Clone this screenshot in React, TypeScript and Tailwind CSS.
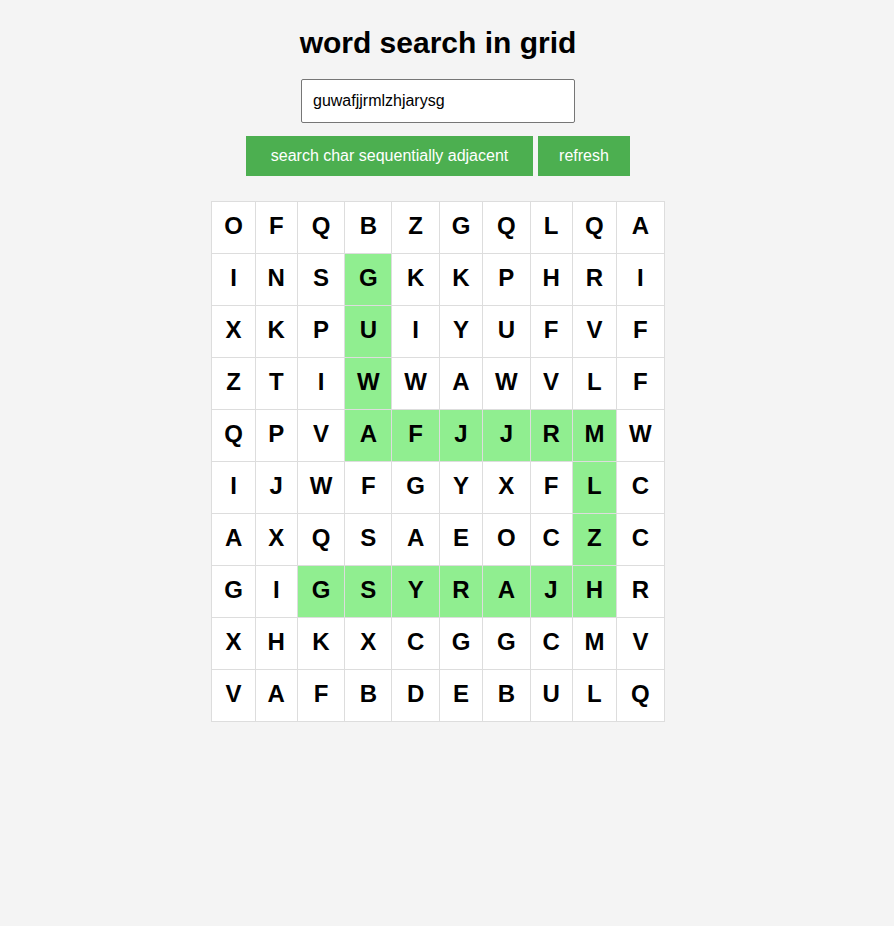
import { useState } from "react"

const GRID = [
  "OFQBZGQLQA",
  "INSGKKPHRI",
  "XKPUIYUFVF",
  "ZTIWWAWVLF",
  "QPVAFJJRMW",
  "IJWFGYXFLC",
  "AXQSAEOCZC",
  "GIGSYRAJHR",
  "XHKXCGGCMV",
  "VAFBDEBULQ",
]

// path of the found word, row-col pairs
const PATH = [
  [1, 3], [2, 3], [3, 3], [4, 3], [4, 4], [4, 5], [4, 6], [4, 7], [4, 8],
  [5, 8], [6, 8], [7, 8], [7, 7], [7, 6], [7, 5], [7, 4], [7, 3], [7, 2],
]

export default function App() {
  const [word, setWord] = useState("guwafjjrmlzhjarysg")
  const found = new Set(PATH.map(([r, c]) => `${r}-${c}`))

  return (
    <div className="min-h-[926px] bg-[#f4f4f4] font-['Liberation_Sans',Arial,sans-serif] text-black">
      <div className="w-[876px] flex flex-col items-center pt-[24px]">
        <h1 className="text-[30px] leading-[37px] font-bold">word search in grid</h1>

        <input
          value={word}
          onChange={(e) => setWord(e.target.value)}
          className="mt-[18px] w-[274px] h-[44px] px-[11px] text-[16px] bg-white border border-[#767676] rounded-[2px] outline-none"
        />

        <div className="mt-[13px] flex gap-[5px]">
          <button className="h-[40px] w-[287px] bg-[#4caf50] text-white text-[16px]">
            search char sequentially adjacent
          </button>
          <button className="h-[40px] w-[92px] bg-[#4caf50] text-white text-[16px]">refresh</button>
        </div>

        <table className="mt-[25px] border-collapse">
          <tbody>
            {GRID.map((row, r) => (
              <tr key={r}>
                {row.split("").map((ch, c) => (
                  <td
                    key={c}
                    className={
                      "border border-[#dddddd] px-[11.85px] pt-[10px] pb-[14px] text-center text-[24px] leading-[27px] font-bold " +
                      (found.has(`${r}-${c}`) ? "bg-[#90ee90]" : "bg-white")
                    }
                  >
                    {ch}
                  </td>
                ))}
              </tr>
            ))}
          </tbody>
        </table>
      </div>
    </div>
  )
}
